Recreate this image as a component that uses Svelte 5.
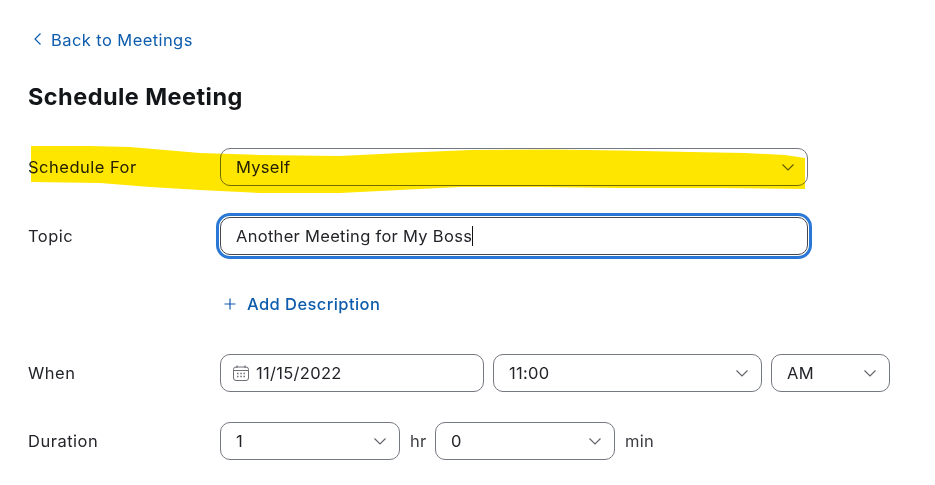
<script>
  const durations = [
    { value: "1", unit: "hr" },
    { value: "0", unit: "min" }
  ];
</script>

{#snippet chevron()}
  <svg class="chevron" width="14" height="14" viewBox="0 0 14 14" fill="none" aria-hidden="true">
    <path d="M1.500 4.500 7 10l5.500-5.500" stroke="#63656b" stroke-width="1.200" />
  </svg>
{/snippet}

<main class="page">
  <a class="back" href="#meetings">
    <svg width="10" height="14" viewBox="0 0 10 14" fill="none" aria-hidden="true">
      <path d="M8.500 .5 3 6l5.500 5.500" stroke="#0e5cad" stroke-width="1.200" />
    </svg>
    Back to Meetings
  </a>

  <h1>Schedule Meeting</h1>

  <div class="row first">
    <span class="label">Schedule For</span>
    <div class="field wide">
      <span>Myself</span>
      {@render chevron()}
    </div>
  </div>

  <div class="row topic">
    <span class="label">Topic</span>
    <div class="field wide focused">
      <span>Another Meeting for My Boss</span><i class="caret"></i>
    </div>
  </div>

  <a class="add" href="#description">
    <svg width="14" height="14" viewBox="0 0 14 14" fill="none" aria-hidden="true">
      <path d="M7 1.500v11M1.500 7h11" stroke="#0e5cad" stroke-width="1.200" />
    </svg>
    Add Description
  </a>

  <div class="row when">
    <span class="label">When</span>
    <div class="controls">
      <div class="field date">
        <svg width="18" height="18" viewBox="0 0 18 18" fill="none" aria-hidden="true">
          <rect x="1.500" y="3" width="15" height="13.500" rx="2.500" stroke="#6e7076" />
          <path d="M1.500 6.500h15M5 1.500V4M13 1.500V4" stroke="#6e7076" stroke-width="1.200" />
          <path d="M5 9.500h1.500M8.300 9.500h1.500M11.500 9.500H13M5 12.500h1.500M8.300 12.500h1.500M11.500 12.500H13" stroke="#6e7076" stroke-width="1.300" />
        </svg>
        <span>11/15/2022</span>
      </div>
      <div class="field time">
        <span>11:00</span>
        {@render chevron()}
      </div>
      <div class="field ampm">
        <span>AM</span>
        {@render chevron()}
      </div>
    </div>
  </div>

  <div class="row duration">
    <span class="label">Duration</span>
    <div class="controls">
      {#each durations as d}
        <div class="field short">
          <span>{d.value}</span>
          {@render chevron()}
        </div>
        <span class="unit">{d.unit}</span>
      {/each}
    </div>
  </div>

  <!-- freehand marker stroke drawn over the first row -->
  <svg class="marker" width="935" height="485" viewBox="0 0 935 485" aria-hidden="true">
    <path
      d="M31 146 90 146 130 147 165 150 200 153 260 155 340 156 400 153 470 150 550 149.500 620 150.500 690 152 745 153 785 155 805 158 805 189 720 188 620 188 540 187 460 187 400 190 340 193 260 193 200 190 150 187 100 183 31 182Z"
      fill="#ffe600"
    />
  </svg>
</main>

<style>
  :global(body) {
    background: #fff;
  }

  .page {
    position: relative;
    width: 935px;
    height: 485px;
    box-sizing: border-box;
    padding: 29px 0 0 28px;
    overflow: hidden;
    font-family: Inter, "Liberation Sans", sans-serif;
    font-size: 16.500px;
    letter-spacing: 0.3px;
    color: #232429;
  }

  a {
    display: flex;
    align-items: center;
    color: #0e5cad;
    text-decoration: none;
    font-weight: 500;
    letter-spacing: 0.42px;
  }

  .back {
    height: 22px;
    gap: 9px;
    font-weight: 400;
  }

  .back svg {
    margin-left: 4px;
  }

  h1 {
    margin: 31px 0 0;
    font-size: 23.500px;
    line-height: 30px;
    font-weight: 700;
    letter-spacing: 0.45px;
    color: #131619;
  }

  .row {
    display: flex;
    align-items: center;
  }

  .first {
    margin-top: 36px;
  }

  .topic {
    margin-top: 31px;
  }

  .duration {
    margin-top: 30px;
  }

  .label {
    width: 192px;
    flex: none;
    letter-spacing: 0.5px;
  }

  .controls {
    display: flex;
    align-items: center;
    gap: 9px;
  }

  .field {
    display: flex;
    align-items: center;
    justify-content: space-between;
    box-sizing: border-box;
    height: 38px;
    padding: 0 12px 0 15px;
    border: 1px solid #747880;
    border-radius: 10px;
    background: #fff;
  }

  .wide {
    width: 588px;
  }

  .focused {
    justify-content: flex-start;
    border-color: #45474d;
    outline: 3px solid #2a78d6;
    outline-offset: 1px;
  }

  .caret {
    width: 1px;
    height: 20px;
    background: #111;
  }

  .date {
    width: 264px;
    justify-content: flex-start;
    gap: 6px;
    padding-left: 11px;
  }

  .time {
    width: 269px;
  }

  .ampm {
    width: 119px;
  }

  .short {
    width: 180px;
  }

  .unit {
    width: 16px;
    margin-left: 1px;
    color: #3b3d42;
  }

  .add {
    height: 22px;
    margin: 38px 0 39px 195px;
    gap: 10px;
  }

  .marker {
    position: absolute;
    top: 0;
    left: 0;
    mix-blend-mode: multiply;
    pointer-events: none;
  }
</style>
